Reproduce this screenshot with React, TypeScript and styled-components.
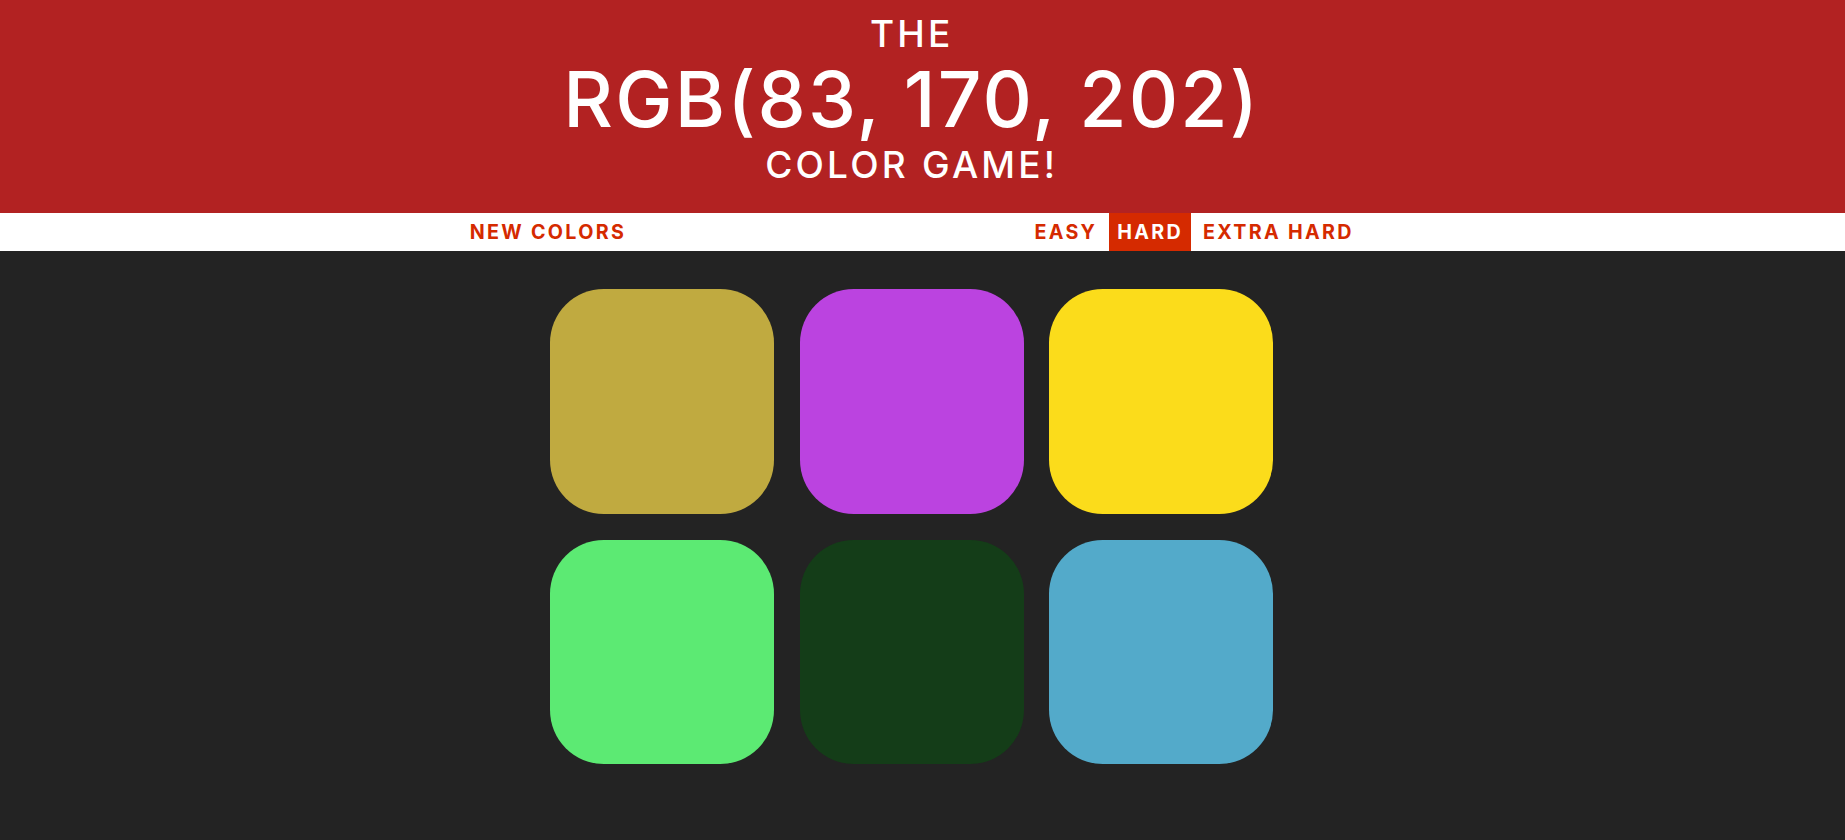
import React, { useState } from 'react';
import styled, { createGlobalStyle } from 'styled-components';

const GlobalStyle = createGlobalStyle`
  html, body {
    margin: 0;
    padding: 0;
    background: #232323;
    min-height: 100vh;
  }
  body {
    font-family: Inter, "Liberation Sans", sans-serif;
  }
  * { box-sizing: border-box; }
`;

const Page = styled.div`
  min-height: 100vh;
  background: #232323;
`;

const Header = styled.h1`
  margin: 0;
  padding: 12px 21.5px 26px 0;
  background: #b22222;
  color: #ffffff;
  text-align: center;
  text-transform: uppercase;
  font-weight: 500;
  font-size: 37px;
`;

const HeadLine = styled.span<{ $big?: boolean }>`
  display: block;
  font-size: ${(p) => (p.$big ? '76.7px' : '37px')};
  line-height: ${(p) => (p.$big ? '87px' : '44px')};
  letter-spacing: ${(p) => (p.$big ? '2.15px' : '3.2px')};
`;

const Stripe = styled.div`
  background: #ffffff;
  height: 38px;
  padding-right: 21.5px;
  display: flex;
  justify-content: center;
`;

const StripeInner = styled.div`
  width: 900px;
  height: 100%;
  display: flex;
  justify-content: space-between;
  align-items: stretch;
`;

const ModeGroup = styled.div`
  display: flex;
  gap: 4px;
  height: 100%;
`;

const StripeButton = styled.button<{ $selected?: boolean }>`
  border: none;
  margin: 0;
  height: 100%;
  padding: 0 8px;
  font-family: Inter, "Liberation Sans", sans-serif;
  font-weight: 700;
  font-size: 19.7px;
  line-height: 38px;
  letter-spacing: 2.3px;
  text-transform: uppercase;
  cursor: pointer;
  outline: none;
  background: ${(p) => (p.$selected ? '#d52a00' : 'transparent')};
  color: ${(p) => (p.$selected ? '#ffffff' : '#d52a00')};
`;

const Board = styled.div`
  padding-right: 21.5px;
  padding-top: 38px;
  display: flex;
  justify-content: center;
`;

const Grid = styled.div`
  display: grid;
  grid-template-columns: repeat(3, 224px);
  column-gap: 25.5px;
  row-gap: 26px;
`;

const Square = styled.div<{ $color: string }>`
  width: 224px;
  height: 224.5px;
  border-radius: 24%;
  background: ${(p) => p.$color};
  cursor: pointer;
`;

const colors = [
  'rgb(192, 170, 64)',
  'rgb(187, 67, 224)',
  'rgb(251, 220, 27)',
  'rgb(92, 234, 115)',
  'rgb(20, 61, 24)',
  'rgb(83, 170, 202)',
];

export default function App() {
  const [mode, setMode] = useState('hard');
  const modes = [
    { key: 'easy', label: 'Easy' },
    { key: 'hard', label: 'Hard' },
    { key: 'extra', label: 'Extra Hard' },
  ];
  return (
    <Page>
      <GlobalStyle />
      <Header>
        <HeadLine>The</HeadLine>
        <HeadLine $big>RGB(83, 170, 202)</HeadLine>
        <HeadLine>Color Game!</HeadLine>
      </Header>
      <Stripe>
        <StripeInner>
          <StripeButton>New Colors</StripeButton>
          <ModeGroup>
            {modes.map((m) => (
              <StripeButton key={m.key} $selected={mode === m.key} onClick={() => setMode(m.key)}>
                {m.label}
              </StripeButton>
            ))}
          </ModeGroup>
        </StripeInner>
      </Stripe>
      <Board>
        <Grid>
          {colors.map((c, i) => (
            <Square key={i} $color={c} />
          ))}
        </Grid>
      </Board>
    </Page>
  );
}
